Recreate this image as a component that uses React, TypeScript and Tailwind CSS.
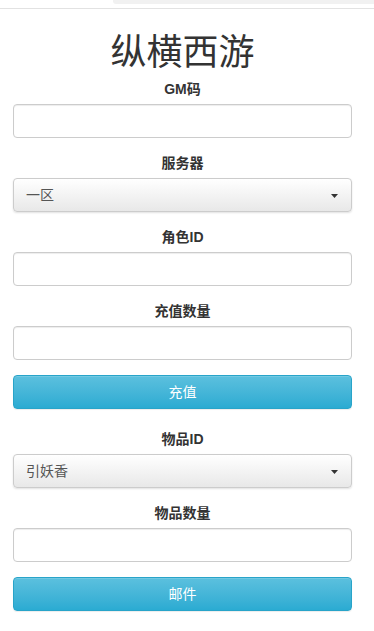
import React from "react";

const font = { fontFamily: '"Liberation Sans", "Noto Sans CJK SC", sans-serif' };

function Label({ children }: { children: React.ReactNode }) {
  return (
    <label className="block h-5 mb-[5px] text-center text-[14px] leading-5 font-bold text-[#333]">
      {children}
    </label>
  );
}

function Input() {
  return (
    <input
      type="text"
      className="block w-full h-[34px] rounded-[4px] border border-[#ccc] bg-white shadow-[inset_0_1px_1px_rgba(0,0,0,0.075)] outline-none"
    />
  );
}

function Select({ value }: { value: string }) {
  return (
    <div className="flex items-center justify-between h-[34px] rounded-[4px] border border-[#ccc] bg-gradient-to-b from-white to-[#e8e8e8] shadow-[0_1px_2px_rgba(0,0,0,0.12)] pl-[12px] pr-[13px] text-[14px] text-[#555]">
      <span>{value}</span>
      <svg width="7" height="4" viewBox="0 0 7 4" className="mt-[1px]">
        <path d="M0 0 L7 0 L3.5 4 Z" fill="#333" />
      </svg>
    </div>
  );
}

function Button({ children }: { children: React.ReactNode }) {
  return (
    <button className="block w-full h-[34px] rounded-[4px] border border-[#28a4c9] bg-gradient-to-b from-[#5bc0de] to-[#2aabd2] text-white text-[14px] shadow-[inset_0_1px_0_rgba(255,255,255,0.15),0_1px_1px_rgba(0,0,0,0.075)]">
      {children}
    </button>
  );
}

export default function App() {
  return (
    <div className="min-h-[631px] bg-white" style={font}>
      <div className="h-[9px] relative border-b border-[#e2e2e2]">
        <div className="ml-[113px] h-[4px] bg-[#f1f1f1] rounded-bl-[3px]" />
      </div>
      <div className="pl-[13px] pr-[22px]">
        <h1
          className="mt-[20px] mb-[10px] h-[40px] text-center text-[36px] leading-[40px] font-normal text-[#333]"
          style={{ fontFamily: '"Noto Sans CJK SC", sans-serif' }}
        >
          纵横西游
        </h1>
        <div className="mb-[15px]">
          <Label>GM码</Label>
          <Input />
        </div>
        <div className="mb-[15px]">
          <Label>服务器</Label>
          <Select value="一区" />
        </div>
        <div className="mb-[15px]">
          <Label>角色ID</Label>
          <Input />
        </div>
        <div className="mb-[15px]">
          <Label>充值数量</Label>
          <Input />
        </div>
        <Button>充值</Button>
        <div className="mt-[20px] mb-[15px]">
          <Label>物品ID</Label>
          <Select value="引妖香" />
        </div>
        <div className="mb-[15px]">
          <Label>物品数量</Label>
          <Input />
        </div>
        <Button>邮件</Button>
      </div>
    </div>
  );
}
